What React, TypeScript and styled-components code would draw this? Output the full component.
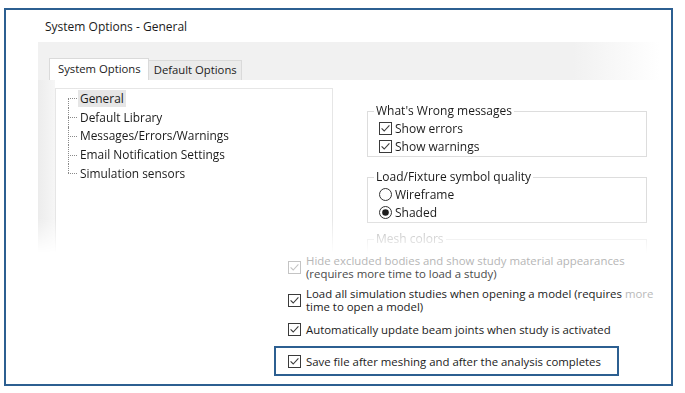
import React from "react";
import styled, { createGlobalStyle } from "styled-components";

const Global = createGlobalStyle`
  html, body { margin: 0; padding: 0; background: #ffffff; }
  body {
    font-family: "Open Sans", "Noto Sans", "DejaVu Sans", sans-serif;
    color: #1b1b1b;
  }
`;

const Frame = styled.div`
  box-sizing: border-box;
  margin: 8px 0 0 4px;
  width: 669px;
  height: 378px;
  border: 2px solid #2c5f91;
  background: #fff;
  display: flex;
  flex-direction: column;
  overflow: hidden;
`;

const Title = styled.div`
  margin: 9px 0 0 39px;
  font-size: 12px;
  line-height: 16px;
`;

const Dialog = styled.div`
  margin: 7px 0 0 32px;
  width: 622px;
  display: flex;
  flex-direction: column;
`;

const TabStrip = styled.div`
  height: 38px;
  box-sizing: border-box;
  background: linear-gradient(to right, #f1f1f1 0%, #f1f1f1 86%, #ffffff 100%);
  display: flex;
  align-items: flex-end;
  padding-left: 11px;
`;

const Tab = styled.div<{ $active?: boolean }>`
  box-sizing: border-box;
  height: ${(p) => (p.$active ? 22 : 20)}px;
  padding: ${(p) => (p.$active ? "1px 7px 0 8px" : "0 4px 0 5px")};
  font-size: 11.3px;
  line-height: 18px;
  background: ${(p) => (p.$active ? "#ffffff" : "#ebebeb")};
  border: 1px solid #dadada;
  border-bottom: none;
  ${(p) => (p.$active ? "" : "border-left: none;")}
`;

const Body = styled.div`
  height: 173px;
  display: flex;
  overflow: hidden;
  -webkit-mask-image: linear-gradient(to bottom, #000 0%, #000 80%, transparent 100%);
  mask-image: linear-gradient(to bottom, #000 0%, #000 80%, transparent 100%);
`;

const Stripe = styled.div`
  width: 17px;
  flex: none;
  background: linear-gradient(to right, #ececec, #f6f6f6);
`;

const TreeBox = styled.div`
  box-sizing: border-box;
  margin-top: 8px;
  width: 278px;
  flex: none;
  border: 1px solid #e6e6e6;
  padding: 0 0 0 12px;
`;

const Tree = styled.ul`
  list-style: none;
  margin: 0;
  padding: 0;
`;

const TreeItem = styled.li`
  position: relative;
  height: 18.75px;
  display: flex;
  align-items: center;
  padding-left: 10px;
  &::before {
    content: "";
    position: absolute;
    left: 0;
    top: 50%;
    width: 9px;
    border-top: 1px dotted #8a8a8a;
  }
  &::after {
    content: "";
    position: absolute;
    left: 0;
    top: 0;
    bottom: 0;
    border-left: 1px dotted #8a8a8a;
  }
  &:first-child::after {
    top: 50%;
  }
  &:last-child::after {
    bottom: 50%;
  }
`;

const TreeLabel = styled.span<{ $selected?: boolean }>`
  font-size: 11.9px;
  line-height: 17px;
  padding: 0 2px;
  background: ${(p) => (p.$selected ? "#e6e6e6" : "transparent")};
`;

const RightCol = styled.div`
  margin-left: 34px;
  width: 280px;
  flex: none;
  padding-top: 23px;
  display: flex;
  flex-direction: column;
`;

const Group = styled.fieldset<{ $gap?: number }>`
  margin: 0 0 ${(p) => p.$gap ?? 0}px 0;
  padding: 0 0 1px 6px;
  border: 1px solid #dddddd;
  min-width: 0;
`;

const Legend = styled.legend<{ $muted?: boolean }>`
  padding: 0 2px;
  font-size: 12px;
  line-height: 16px;
  color: ${(p) => (p.$muted ? "#a0a0a0" : "#1b1b1b")};
`;

const GroupRow = styled.div`
  height: 18px;
  display: flex;
  align-items: center;
  gap: 3px;
  margin-left: 5px;
  font-size: 12px;
`;

const Options = styled.div`
  margin: 1px 0 0 282px;
  display: flex;
  flex-direction: column;
  align-items: flex-start;
  font-size: 11.4px;
  line-height: 13px;
`;

const OptionRow = styled.div<{ $top?: number; $highlight?: boolean }>`
  margin-top: ${(p) => p.$top ?? 0}px;
  display: flex;
  align-items: center;
  gap: 5px;
  ${(p) =>
    p.$highlight
      ? `
    margin-left: -14px;
    padding: 6.5px 16px 6.5px 12px;
    border: 2px solid #2c5f91;
  `
      : ""}
`;

const OptionText = styled.div`
  display: flex;
  flex-direction: column;
  white-space: nowrap;
`;

const Line = styled.span<{ $tone?: "dim" | "mid" }>`
  color: ${(p) =>
    p.$tone === "dim" ? "#b6b6b6" : p.$tone === "mid" ? "#4a4a4a" : "#1b1b1b"};
`;

const Faint = styled.span`
  color: #b9b9b9;
`;

const BoxIcon = styled.svg`
  flex: none;
  display: block;
`;

function CheckBox({ color = "#3a3a3a" }: { color?: string }) {
  return (
    <BoxIcon width="13" height="13" viewBox="0 0 13 13">
      <rect x="0.5" y="0.5" width="12" height="12" fill="#fff" stroke={color} />
      <path d="M2.6 6.4 L5.2 9 L10.4 3.4" fill="none" stroke={color} strokeWidth="1.1" />
    </BoxIcon>
  );
}

function Radio({ on }: { on?: boolean }) {
  return (
    <BoxIcon width="13" height="13" viewBox="0 0 13 13">
      <circle cx="6.5" cy="6.5" r="6" fill="#fff" stroke="#333" />
      {on && <circle cx="6.5" cy="6.5" r="3.3" fill="#1e1e1e" />}
    </BoxIcon>
  );
}

export default function App() {
  return (
    <>
      <Global />
      <Frame>
        <Title>System Options - General</Title>
        <Dialog>
          <TabStrip>
            <Tab $active>System Options</Tab>
            <Tab>Default Options</Tab>
          </TabStrip>
          <Body>
            <Stripe />
            <TreeBox>
              <Tree>
                <TreeItem><TreeLabel $selected>General</TreeLabel></TreeItem>
                <TreeItem><TreeLabel>Default Library</TreeLabel></TreeItem>
                <TreeItem><TreeLabel>Messages/Errors/Warnings</TreeLabel></TreeItem>
                <TreeItem><TreeLabel>Email Notification Settings</TreeLabel></TreeItem>
                <TreeItem><TreeLabel>Simulation sensors</TreeLabel></TreeItem>
              </Tree>
            </TreeBox>
            <RightCol>
              <Group $gap={12}>
                <Legend>What's Wrong messages</Legend>
                <GroupRow><CheckBox />Show errors</GroupRow>
                <GroupRow><CheckBox />Show warnings</GroupRow>
              </Group>
              <Group $gap={8}>
                <Legend>Load/Fixture symbol quality</Legend>
                <GroupRow><Radio />Wireframe</GroupRow>
                <GroupRow><Radio on />Shaded</GroupRow>
              </Group>
              <Group>
                <Legend $muted>Mesh colors</Legend>
                <GroupRow />
              </Group>
            </RightCol>
          </Body>
        </Dialog>
        <Options>
          <OptionRow>
            <CheckBox color="#c4c4c4" />
            <OptionText>
              <Line $tone="dim">Hide excluded bodies and show study material appearances</Line>
              <Line $tone="mid">(requires more time to load a study)</Line>
            </OptionText>
          </OptionRow>
          <OptionRow $top={7}>
            <CheckBox />
            <OptionText>
              <Line>
                Load all simulation studies when opening a model (requires <Faint>more</Faint>
              </Line>
              <Line>time to open a model)</Line>
            </OptionText>
          </OptionRow>
          <OptionRow $top={10}>
            <CheckBox />
            <OptionText>
              <Line>Automatically update beam joints when study is activated</Line>
            </OptionText>
          </OptionRow>
          <OptionRow $top={10} $highlight>
            <CheckBox />
            <OptionText>
              <Line>Save file after meshing and after the analysis completes</Line>
            </OptionText>
          </OptionRow>
        </Options>
      </Frame>
    </>
  );
}
